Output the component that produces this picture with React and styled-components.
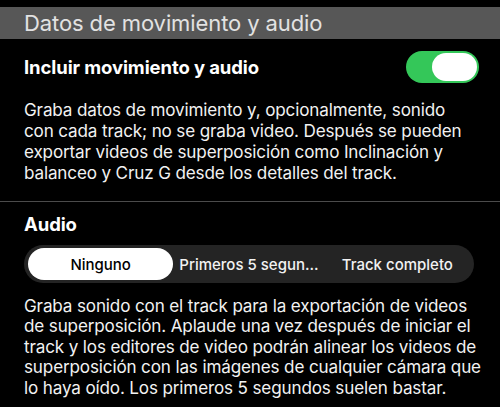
import React, { useState } from 'react';
import styled, { createGlobalStyle } from 'styled-components';

const GlobalStyle = createGlobalStyle`
  html, body {
    margin: 0;
    padding: 0;
    background: #000;
  }
  body {
    font-family: Inter, "Liberation Sans", sans-serif;
    color: #fff;
    -webkit-font-smoothing: antialiased;
  }
`;

const Page = styled.div`
  width: 500px;
  height: 407px;
  overflow: hidden;
  padding-top: 7px;
  box-sizing: border-box;
  background: #000;
`;

const SectionHeader = styled.div`
  height: 32px;
  background: #575757;
  color: #e2e2e2;
  font-size: 22px;
  line-height: 32px;
  padding: 0 24px;
  letter-spacing: -0.1px;
`;

const Section = styled.section`
  padding: ${p => p.$top}px 21px ${p => p.$bottom}px 24px;
  border-bottom: 1px solid #4b4b4b;
`;

const Row = styled.div`
  display: flex;
  align-items: center;
  justify-content: space-between;
  height: 32px;
`;

const Title = styled.div`
  font-size: 18.5px;
  font-weight: 700;
  line-height: 22px;
  letter-spacing: -0.1px;
`;

const Toggle = styled.button`
  width: 73px;
  height: 32px;
  border-radius: 16px;
  border: none;
  padding: 0 2px;
  background: ${p => (p.$on ? '#34c759' : '#39393d')};
  display: flex;
  align-items: center;
  justify-content: ${p => (p.$on ? 'flex-end' : 'flex-start')};
  cursor: pointer;
`;

const Knob = styled.span`
  width: 45px;
  height: 28px;
  border-radius: 14px;
  background: #fff;
`;

const Text = styled.p`
  margin: ${p => p.$mt}px 0 0;
  font-size: 17.1px;
  line-height: ${p => p.$lh}px;
  color: #f2f2f2;
  letter-spacing: -0.15px;
  white-space: nowrap;
`;

const Segmented = styled.div`
  margin-top: 10px;
  width: 450px;
  height: 38px;
  border-radius: 19px;
  background: #242424;
  padding: 3px 4px;
  box-sizing: border-box;
  display: grid;
  grid-template-columns: repeat(3, 1fr);
`;

const Segment = styled.button`
  border: none;
  border-radius: 17px;
  background: ${p => (p.$active ? '#fff' : 'transparent')};
  color: ${p => (p.$active ? '#000' : '#f2f2f2')};
  font-family: inherit;
  font-size: 15px;
  font-weight: 500;
  padding: 0 6px;
  white-space: nowrap;
  cursor: pointer;
`;

const options = ['Ninguno', 'Primeros 5 segun...', 'Track completo'];

export default function App() {
  const [on, setOn] = useState(true);
  const [sel, setSel] = useState(0);
  return (
    <Page>
      <GlobalStyle />
      <SectionHeader>Datos de movimiento y audio</SectionHeader>
      <Section $top={12} $bottom={18}>
        <Row>
          <Title>Incluir movimiento y audio</Title>
          <Toggle $on={on} onClick={() => setOn(!on)}>
            <Knob />
          </Toggle>
        </Row>
        <Text $mt={16} $lh={21}>
          Graba datos de movimiento y, opcionalmente, sonido<br />
          con cada track; no se graba video. Después se pueden<br />
          exportar videos de superposición como Inclinación y<br />
          balanceo y Cruz G desde los detalles del track.
        </Text>
      </Section>
      <Section $top={11} $bottom={11}>
        <Title>Audio</Title>
        <Segmented>
          {options.map((o, i) => (
            <Segment key={o} $active={sel === i} onClick={() => setSel(i)}>
              {o}
            </Segment>
          ))}
        </Segmented>
        <Text $mt={13} $lh={20.4}>
          Graba sonido con el track para la exportación de videos<br />
          de superposición. Aplaude una vez después de iniciar el<br />
          track y los editores de video podrán alinear los videos de<br />
          superposición con las imágenes de cualquier cámara que<br />
          lo haya oído. Los primeros 5 segundos suelen bastar.
        </Text>
      </Section>
    </Page>
  );
}
